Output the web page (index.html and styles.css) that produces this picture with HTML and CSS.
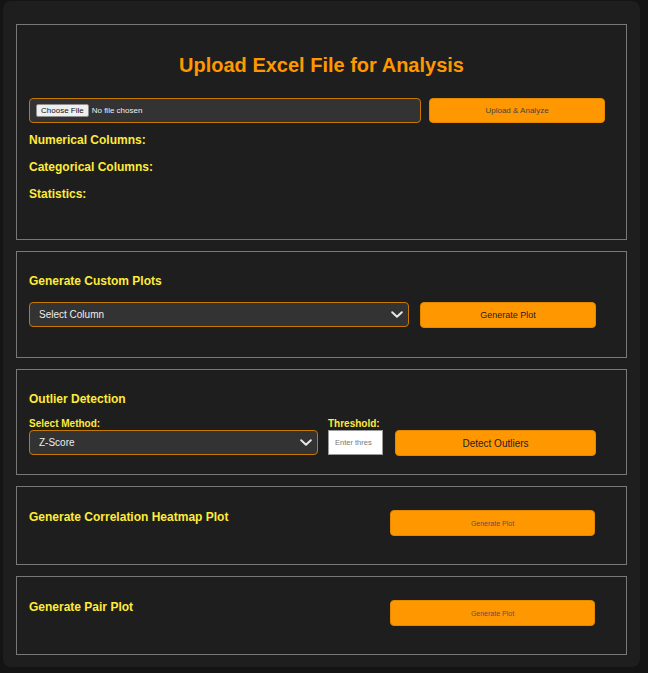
FILE: index.html
```html
<!DOCTYPE html>
<html lang="en">

<head>
  <meta charset="utf-8" />
  <title>Excel Data Analysis</title>
  <meta name="viewport" content="width=device-width, initial-scale=1" />
  <link rel="stylesheet" href="styles.css">
</head>

<body>
  <div class="container">
    <!-- Upload -->
    <div class="section upload-section">
      <h2 class="title">Upload Excel File for Analysis</h2>
      <div class="file-row">
        <input type="file" id="file" class="file-input" accept=".xlsx,.xls" />
        <button type="button" class="btn btn-upload">Upload &amp; Analyze</button>
      </div>
      <div class="stats">
        <h3 class="heading">Numerical Columns:</h3>
        <h3 class="heading">Categorical Columns:</h3>
        <h3 class="heading">Statistics:</h3>
      </div>
    </div>

    <!-- Custom plots -->
    <div class="section">
      <h3 class="heading heading-gap">Generate Custom Plots</h3>
      <div class="plot-row">
        <div class="select-wrap select-column">
          <select id="column">
            <option>Select Column</option>
          </select>
          <svg class="chevron" width="12" height="7" viewBox="0 0 12 7">
            <path d="M1.2 1.2 L6 5.8 L10.8 1.2" />
          </svg>
        </div>
        <button type="button" class="btn btn-plot">Generate Plot</button>
      </div>
    </div>

    <!-- Outliers -->
    <div class="section outlier-section">
      <h3 class="heading outlier-gap">Outlier Detection</h3>
      <div class="outlier-row">
        <div class="field field-method">
          <label class="field-label" for="method">Select Method:</label>
          <div class="select-wrap">
            <select id="method">
              <option>Z-Score</option>
              <option>IQR</option>
            </select>
            <svg class="chevron" width="12" height="7" viewBox="0 0 12 7">
              <path d="M1.2 1.2 L6 5.8 L10.8 1.2" />
            </svg>
          </div>
        </div>
        <div class="field field-threshold">
          <label class="field-label" for="threshold">Threshold:</label>
          <input type="text" id="threshold" class="threshold" placeholder="Enter threshold" />
        </div>
        <button type="button" class="btn btn-outliers">Detect Outliers</button>
      </div>
    </div>

    <!-- Heatmap -->
    <div class="section inline-section">
      <h3 class="heading">Generate Correlation Heatmap Plot</h3>
      <button type="button" class="btn btn-small">Generate Plot</button>
    </div>

    <!-- Pair plot -->
    <div class="section inline-section">
      <h3 class="heading">Generate Pair Plot</h3>
      <button type="button" class="btn btn-small">Generate Plot</button>
    </div>
  </div>
</body>

</html>
```

FILE: styles.css
```css
/* Reset & Global Styles */
* {
  box-sizing: border-box;
  padding: 0;
  margin: 0;
  font-family: "Liberation Sans", Arial, sans-serif;
}

body {
  background-color: #141414;
}

.container {
  width: 637px;
  margin: 1px 0 0 3px;
  padding: 23px 13px 12px;
  background-color: #1e1e1e;
  border-radius: 8px;
}

.section {
  border: 1px solid #787878;
  padding: 22px 12px 29px;
  margin-bottom: 11px;
}

.section:last-child {
  margin-bottom: 0;
}

.title {
  font-size: 20px;
  line-height: 23px;
  color: #ff9800;
  text-align: center;
  margin-bottom: 21px;
}

.heading {
  font-size: 12px;
  line-height: 14px;
  font-weight: bold;
  color: #ffeb3b;
}

.heading-gap {
  margin-bottom: 14px;
}

.outlier-gap {
  margin-bottom: 12px;
}

/* Upload section */
.upload-section {
  padding: 29px 12px 38px;
}

.file-row {
  display: flex;
  gap: 8px;
}

.file-input {
  width: 392px;
  height: 25px;
  padding: 5px 6px 0;
  font-size: 8px;
  color: #eee;
  background-color: #333;
  border: 1px solid #c77800;
  border-radius: 4px;
}

.file-input::file-selector-button {
  font-size: 8px;
  padding: 1px 4px;
  margin-right: 3px;
  color: #111;
  background-color: #efefef;
  border: 1px solid #8f8f8f;
  border-radius: 2px;
}

.stats {
  margin-top: 10px;
  display: flex;
  flex-direction: column;
  gap: 13px;
}

/* Buttons */
.btn {
  height: 26px;
  color: #333;
  background-color: #ff9800;
  border: 1px solid #e48800;
  border-radius: 4px;
  cursor: pointer;
}

.btn-upload {
  width: 176px;
  height: 25px;
  font-size: 8px;
  color: #444;
}

.btn-plot {
  width: 176px;
  font-size: 9px;
  color: #222;
}

.btn-outliers {
  width: 201px;
  margin-top: 12px;
  font-size: 10px;
  color: #222;
}

.btn-small {
  width: 205px;
  margin-right: 19px;
  font-size: 7px;
  color: #555;
}

/* Selects */
.plot-row {
  display: flex;
  gap: 11px;
}

.select-wrap {
  position: relative;
}

.select-column {
  width: 380px;
}

.select-wrap select {
  width: 100%;
  height: 25px;
  padding: 0 9px;
  font-size: 10px;
  color: #eee;
  background-color: #333;
  border: 1px solid #c77800;
  border-radius: 4px;
  appearance: none;
  -webkit-appearance: none;
  outline: none;
}

.chevron {
  position: absolute;
  right: 6px;
  top: 9px;
  pointer-events: none;
}

.chevron path {
  fill: none;
  stroke: #e6e6e6;
  stroke-width: 2;
  stroke-linecap: round;
  stroke-linejoin: round;
}

/* Outlier section */
.outlier-section {
  padding-bottom: 18px;
}

.outlier-row {
  display: flex;
  align-items: flex-start;
}

.field {
  display: flex;
  flex-direction: column;
}

.field-label {
  font-size: 10px;
  line-height: 12px;
  font-weight: bold;
  color: #ffeb3b;
}

.field-method {
  width: 289px;
  margin-right: 10px;
}

.field-threshold {
  width: 55px;
  margin-right: 12px;
}

.threshold {
  width: 55px;
  height: 25px;
  padding: 0 10px 0 6px;
  font-size: 7.5px;
  background-color: #fff;
  border: 1px solid #9a9a9a;
  outline: none;
}

.threshold::placeholder {
  color: #777;
}

/* Heatmap & pair plot */
.inline-section {
  display: flex;
  align-items: flex-start;
  padding: 23px 12px 28px;
}

.inline-section .heading {
  flex: 1;
}
```
